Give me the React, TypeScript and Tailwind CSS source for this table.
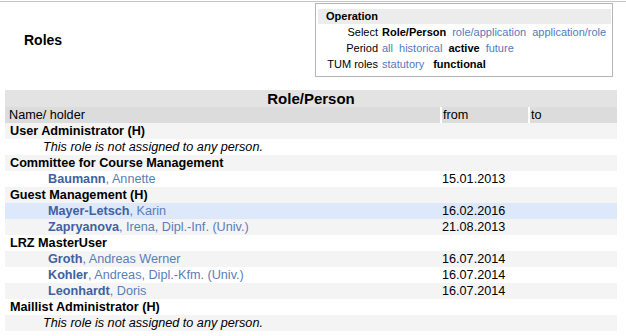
import React from "react";

type Person = { last: string; rest: string; from: string };
type Role = { name: string; people: Person[] };

const roles: Role[] = [
  { name: "User Administrator (H)", people: [] },
  {
    name: "Committee for Course Management",
    people: [{ last: "Baumann", rest: ", Annette", from: "15.01.2013" }],
  },
  {
    name: "Guest Management (H)",
    people: [
      { last: "Mayer-Letsch", rest: ", Karin", from: "16.02.2016" },
      { last: "Zapryanova", rest: ", Irena, Dipl.-Inf. (Univ.)", from: "21.08.2013" },
    ],
  },
  {
    name: "LRZ MasterUser",
    people: [
      { last: "Groth", rest: ", Andreas Werner", from: "16.07.2014" },
      { last: "Kohler", rest: ", Andreas, Dipl.-Kfm. (Univ.)", from: "16.07.2014" },
      { last: "Leonhardt", rest: ", Doris", from: "16.07.2014" },
    ],
  },
  { name: "Maillist Administrator (H)", people: [] },
];

const OpRow = ({ label, children }: { label: string; children: React.ReactNode }) => (
  <div className="flex h-4 items-center">
    <div className="w-[60px] shrink-0 text-right">{label}</div>
    <div className="ml-[4px] flex gap-x-[6px] whitespace-nowrap">{children}</div>
  </div>
);

const Link = ({ children }: { children: React.ReactNode }) => (
  <span className="text-[#4f7cc0]">{children}</span>
);

export default function App() {
  // flatten roles into table rows so stripes alternate across the whole body
  const rows: React.ReactNode[] = [];
  roles.forEach((r) => {
    rows.push(
      <td colSpan={3} className="pl-[5px] font-bold">
        {r.name}
      </td>
    );
    if (r.people.length === 0) {
      rows.push(
        <td colSpan={3} className="pl-[38px] italic">
          This role is not assigned to any person.
        </td>
      );
    }
    r.people.forEach((p) => {
      rows.push(
        <>
          <td className="pl-[43px]">
            <span className="font-bold text-[#41619f]">{p.last}</span>
            <span className="text-[#5b7db8]">{p.rest}</span>
          </td>
          <td className="pl-[1px]">{p.from}</td>
          <td />
        </>
      );
    });
  });

  return (
    <div className="min-h-screen bg-white font-['Liberation_Sans',Arial,sans-serif] text-[12.65px] leading-4 text-black">
      <div className="mt-px border-t border-[#c4c4c4]">
        <div className="flex items-start">
          <h1 className="ml-6 mt-[28px] text-[14px] font-bold leading-5">Roles</h1>
          <div className="ml-auto mr-[13px] mt-px w-[298px] border border-[#b4b4b4] pb-[4px] pl-[2px] pr-[1px] pt-[5px] text-[11px]">
            <div className="h-[15px] bg-[#ececec] pl-2 font-bold leading-[15px]">Operation</div>
            <OpRow label="Select">
              <span className="font-bold">Role/Person</span>
              <Link>role/application</Link>
              <Link>application/role</Link>
            </OpRow>
            <OpRow label="Period">
              <Link>all</Link>
              <Link>historical</Link>
              <span className="font-bold">active</span>
              <Link>future</Link>
            </OpRow>
            <OpRow label="TUM roles">
              <Link>statutory</Link>
              <span className="ml-[3px] font-bold">functional</span>
            </OpRow>
          </div>
        </div>

        <table className="ml-[5px] mt-[13px] w-[612px] border-collapse">
          <thead>
            <tr className="h-[17px] bg-[#e3e3e3]">
              <th colSpan={3} className="text-center text-[15px] font-bold leading-[17px]">
                Role/Person
              </th>
            </tr>
            <tr className="h-4 bg-[#dcdcdc] text-left">
              <th className="w-[436px] pl-[4px] font-normal">Name/ holder</th>
              <th className="w-[88px] border-l-2 border-white pl-[1px] font-normal">from</th>
              <th className="border-l-2 border-white pl-[1px] font-normal">to</th>
            </tr>
          </thead>
          <tbody>
            {rows.map((cells, i) => {
              const hl = i === 5;
              const bg = hl ? "bg-[#dde8fb]" : i % 2 === 0 ? "bg-[#f4f4f4]" : "bg-white";
              return (
                <tr key={i} className={`h-4 ${bg}`}>
                  {cells}
                </tr>
              );
            })}
          </tbody>
        </table>
      </div>
    </div>
  );
}
